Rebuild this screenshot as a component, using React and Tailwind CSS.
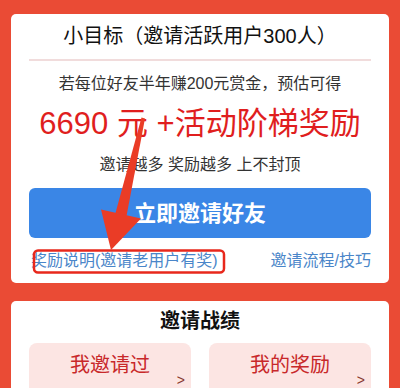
import React from "react";

const font = { fontFamily: '"Liberation Sans", "Noto Sans CJK SC", sans-serif' };

export default function App() {
  return (
    <div
      className="relative w-[400px] h-[388px] overflow-hidden bg-[#ea4b35] px-[11px] pt-[14px]"
      style={font}
    >
      <div className="bg-white rounded-[5px] px-[18px] pt-[8px] pb-[10px] flex flex-col items-center">
        <div className="text-[20px] leading-[28px] text-[#111]">小目标（邀请活跃用户300人）</div>
        <div className="w-full h-[2px] bg-[#f1dcdc] mt-[9px]" />
        <div className="mt-[11px] text-[16px] leading-[24px] text-[#333]">
          若每位好友半年赚200元赏金，预估可得
        </div>
        <div className="mt-[8px] text-[31px] leading-[40px] text-[#e01e1e]">
          6690 元 +活动阶梯奖励
        </div>
        <div className="mt-[9px] text-[16px] leading-[24px] text-[#333]">
          邀请越多 奖励越多 上不封顶
        </div>
        <div className="mt-[11px] w-full h-[50px] rounded-[6px] bg-[#3a86e6] flex items-center justify-center text-white text-[22px] font-bold">
          立即邀请好友
        </div>
        <div className="mt-[11px] w-full flex justify-between text-[16px] leading-[24px] text-[#4a86c9]">
          <span className="pl-[2px]">奖励说明(邀请老用户有奖)</span>
          <span>邀请流程/技巧</span>
        </div>
      </div>

      <div className="mt-[18px] bg-white rounded-[5px] px-[18px] pt-[6px] pb-[10px] flex flex-col items-center">
        <div className="text-[20px] leading-[28px] font-bold text-[#111]">邀请战绩</div>
        <div className="mt-[8px] w-full grid grid-cols-2 gap-[18px]">
          <div className="h-[70px] rounded-[8px] bg-[#fce5e3] flex flex-col items-center pt-[8px] relative">
            <div className="text-[20px] leading-[28px] text-[#c8282a]">我邀请过</div>
            <div className="absolute right-[6px] top-[28px] text-[14px] leading-[18px] text-[#8a3a30]">&gt;</div>
          </div>
          <div className="h-[70px] rounded-[8px] bg-[#fce5e3] flex flex-col items-center pt-[8px] relative">
            <div className="text-[20px] leading-[28px] text-[#c8282a]">我的奖励</div>
            <div className="absolute right-[6px] top-[28px] text-[14px] leading-[18px] text-[#8a3a30]">&gt;</div>
          </div>
        </div>
      </div>

      <svg
        className="absolute left-0 top-0 pointer-events-none"
        width="400"
        height="388"
        viewBox="0 0 400 388"
      >
        <rect
          x="34"
          y="250.5"
          width="190"
          height="22"
          rx="4"
          fill="none"
          stroke="#e8281c"
          strokeWidth="2.5"
        />
        <polygon
          points="141.5,117.5 145,118.5 126.5,216 115.5,213"
          fill="#ea3c26"
        />
        <polygon points="101,209.5 141,218.5 111,250" fill="#ea3c26" />
      </svg>
    </div>
  );
}
